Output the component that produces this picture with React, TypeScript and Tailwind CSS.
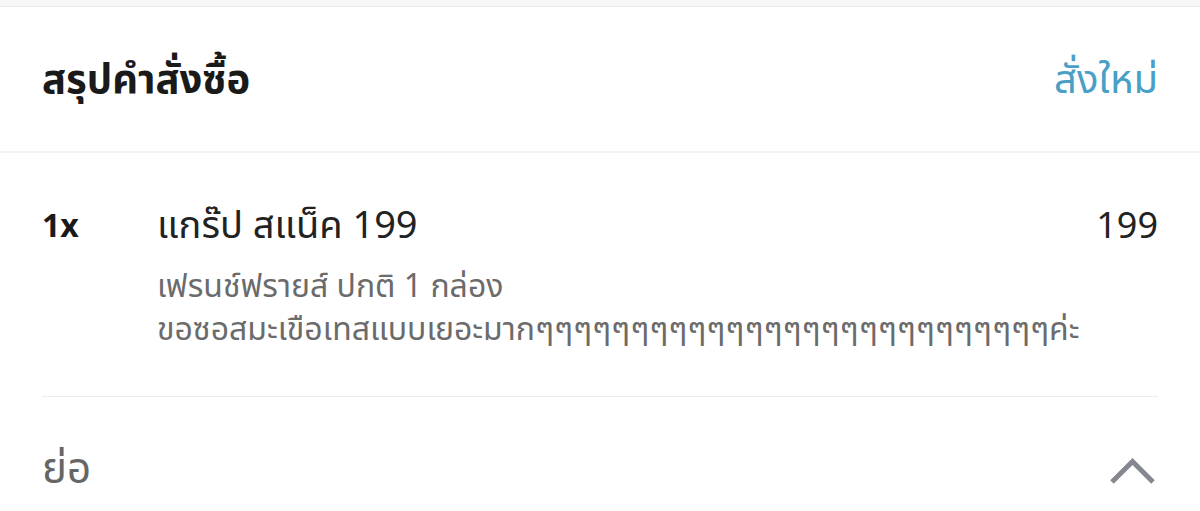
export default function App() {
  const font = { fontFamily: '"Noto Sans Thai", "Noto Sans", "Open Sans", sans-serif' };
  return (
    <div className="w-[1200px] h-[511px] bg-white overflow-hidden" style={font}>
      <div className="h-[7px] bg-[#f7f7f7] border-b border-[#ececec]" />

      {/* Header */}
      <div className="h-[146px] flex items-center justify-between px-[42px] border-b-2 border-[#f3f3f3]">
        <h1 className="text-[40px] font-bold text-[#1a1a1a] leading-none pt-[4px]">สรุปคำสั่งซื้อ</h1>
        <button className="text-[40px] text-[#4a9fc6] leading-none pt-[4px]">สั่งใหม่</button>
      </div>

      {/* Item */}
      <div className="px-[42px]">
        <div className="flex pt-[48px] pb-[44px] border-b border-[#ededed]">
          <div className="w-[115px] text-[32px] font-bold text-[#1a1a1a] leading-[52px]">1x</div>
          <div className="flex-1">
            <div className="text-[38px] text-[#222] leading-[52px]">แกร๊ป สแน็ค 199</div>
            <div className="text-[32px] text-[#6b6b6b] leading-[43px] mt-[13px]">
              <div>เฟรนช์ฟรายส์ ปกติ 1 กล่อง</div>
              <div>ขอซอสมะเขือเทสแบบเยอะมากๆๆๆๆๆๆๆๆๆๆๆๆๆๆๆๆๆๆๆๆๆๆๆๆๆๆๆค่ะ</div>
            </div>
          </div>
          <div className="text-[36px] text-[#222] leading-[52px]">199</div>
        </div>

        {/* Footer */}
        <div className="h-[146px] flex items-center justify-between">
          <span className="text-[42px] text-[#666] leading-none">ย่อ</span>
          <svg width="47" height="30" viewBox="0 0 47 30" className="mr-[2px]">
            <path d="M3 27 L23.5 6.5 L44 27" fill="none" stroke="#868891" strokeWidth="5" />
          </svg>
        </div>
      </div>
    </div>
  );
}
